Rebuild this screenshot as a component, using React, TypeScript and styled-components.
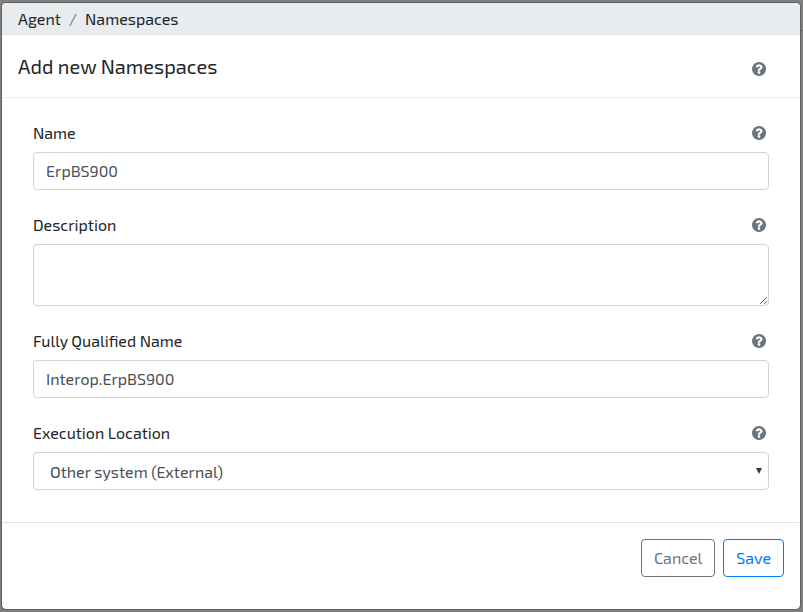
import React from 'react';
import styled, { createGlobalStyle, css } from 'styled-components';

const GlobalStyle = createGlobalStyle`
  *, *::before, *::after { box-sizing: border-box; }
  body {
    margin: 0;
    background: #7f7f7f;
    color: #212529;
    font: 400 16px/1.5 "Exo 2", Roboto, sans-serif;
  }
  button, input, textarea, select { font: inherit; margin: 0; }
`;

const Backdrop = styled.div`
  height: 612px;
  padding: 2px 2px 2px 1px;
  background: linear-gradient(#7f7f7f 30px, #6a6a6a 30px, #6a6a6a 31px, #7f7f7f 31px);
  overflow: hidden;
`;

const Modal = styled.main`
  display: flex;
  flex-direction: column;
  height: 608px;
  background: #fff;
  background-clip: padding-box;
  border: 1px solid #5f5f5f;
  border-radius: 5px;
  overflow: hidden;
`;

const Breadcrumb = styled.nav`
  display: flex;
  height: 32px;
  flex: none;
  padding: 4px 16px 3px;
  background: #e9ecef;
  border-bottom: 1px solid #dee2e6;
`;

const Crumb = styled.span`
  & + &::before {
    content: '/';
    padding: 0 8px;
    color: #6c757d;
  }
`;

const Header = styled.header`
  display: flex;
  flex: none;
  justify-content: space-between;
  height: 63px;
  padding: 16px 34px 16px 16px;
  border-bottom: 1px solid #e9ecef;
`;

const Title = styled.h5`
  margin: 0;
  font-size: 20px;
  font-weight: 400;
  line-height: 30px;
`;

const HelpGlyph = styled.svg<{ $drop: number }>`
  width: 14px;
  height: 14px;
  flex: none;
  margin-top: ${(p) => p.$drop}px;
  margin-right: 0.3px;
  fill: #6c757d;
`;

function HelpIcon({ drop = 5 }: { drop?: number }) {
  return (
    <HelpGlyph $drop={drop} viewBox="128 128 1536 1536" aria-hidden="true">
      <path d="M1024 1376v-192q0-14-9-23t-23-9h-192q-14 0-23 9t-9 23v192q0 14 9 23t23 9h192q14 0 23-9t9-23zm256-672q0-88-55.5-163t-138.5-116-170-41q-243 0-371 213-15 24 8 42l132 100q7 6 19 6 16 0 25-12 53-68 86-92 34-24 86-24 48 0 85.5 26t37.5 59q0 38-20 61t-68 45q-63 28-115.5 86.500t-52.5 125.500v36q0 14 9 23t23 9h192q14 0 23-9t9-23q0-19 21.500-49.500t54.500-49.500q32-18 49-28.500t46-35 44.500-48 28-60.500 12.500-81zm384 192q0 209-103 385.500t-279.500 279.500-385.500 103-385.500-103-279.500-279.500-103-385.500 103-385.500 279.500-279.500 385.500-103 385.500 103 279.500 279.500 103 385.500z" />
    </HelpGlyph>
  );
}

const Form = styled.form`
  display: flex;
  flex: none;
  flex-direction: column;
  gap: 23px;
  height: 424px;
  padding: 23px 31px 0;
`;

const Field = styled.div`
  display: flex;
  flex-direction: column;
`;

const LabelRow = styled.div`
  display: flex;
  justify-content: space-between;
  height: 31px;
  padding-right: 3px;
`;

const control = css`
  display: block;
  width: 100%;
  height: 38px;
  padding: 5px 12px 7px;
  color: #495057;
  background: #fff;
  border: 1px solid #ced4da;
  border-radius: 4px;
  outline: none;
`;

const Input = styled.input`
  ${control}
`;

const TextArea = styled.textarea`
  ${control}
  height: 62px;
  resize: vertical;
`;

const SelectBox = styled.div`
  display: flex;
  align-items: center;
  position: relative;
`;

const Select = styled.select`
  ${control}
  padding: 7px 16px 5px;
  appearance: none;
`;

const Arrow = styled.svg`
  position: absolute;
  right: 7px;
  top: 16px;
  width: 6px;
  height: 6px;
  fill: #343a40;
  pointer-events: none;
`;

const Footer = styled.footer`
  display: flex;
  flex: 1;
  align-items: flex-start;
  justify-content: flex-end;
  gap: 8px;
  margin: 0 1px;
  padding: 16px 15px 0;
  border-top: 1px solid #dee2e6;
`;

const Button = styled.button<{ $color: string }>`
  height: 38px;
  padding: 6px 12px;
  color: ${(p) => p.$color};
  background: transparent;
  border: 1px solid ${(p) => p.$color};
  border-radius: 4px;
`;

function FormField({ label, id, children }: { label: string; id: string; children: React.ReactNode }) {
  return (
    <Field>
      <LabelRow>
        <label htmlFor={id}>{label}</label>
        <HelpIcon />
      </LabelRow>
      {children}
    </Field>
  );
}

export default function App() {
  return (
    <>
      <GlobalStyle />
      <Backdrop>
        <Modal>
          <Breadcrumb>
            <Crumb>Agent</Crumb>
            <Crumb>Namespaces</Crumb>
          </Breadcrumb>
          <Header>
            <Title>Add new Namespaces</Title>
            <HelpIcon drop={11} />
          </Header>
          <Form>
            <FormField label="Name" id="name">
              <Input id="name" defaultValue="ErpBS900" />
            </FormField>
            <FormField label="Description" id="description">
              <TextArea id="description" />
            </FormField>
            <FormField label="Fully Qualified Name" id="qualified-name">
              <Input id="qualified-name" defaultValue="Interop.ErpBS900" />
            </FormField>
            <FormField label="Execution Location" id="location">
              <SelectBox>
                <Select id="location" defaultValue="external">
                  <option value="external">Other system (External)</option>
                </Select>
                <Arrow viewBox="0 0 6 6">
                  <path d="M0 0h6L3 6z" />
                </Arrow>
              </SelectBox>
            </FormField>
          </Form>
          <Footer>
            <Button type="button" $color="#6c757d">Cancel</Button>
            <Button type="button" $color="#007bff">Save</Button>
          </Footer>
        </Modal>
      </Backdrop>
    </>
  );
}
